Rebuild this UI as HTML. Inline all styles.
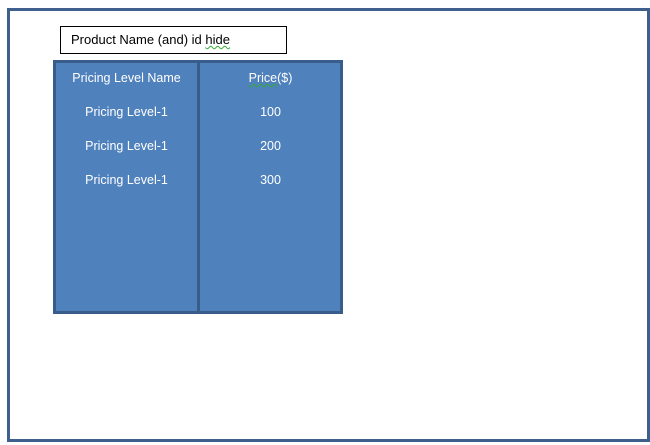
<!DOCTYPE html><html><head><style>
body{margin:0;width:650px;height:445px;background:#fff;position:relative;font-family:"Liberation Sans",sans-serif;overflow:hidden}
.o{position:absolute;left:7px;top:8px;width:637px;height:428px;border:3px solid #3f5f8c}
.b{position:absolute;left:60px;top:26px;border:1px solid #000;font-size:13px;line-height:26px;padding-left:10px;box-sizing:border-box;width:227px;height:28px}
.t{position:absolute;left:53px;top:60px;width:284px;height:248px;border:3px solid #385d8a;background:#4f81bd}
.d{position:absolute;left:197px;top:60px;width:3px;height:254px;background:#385d8a}
.c{position:absolute;color:#fff;font-size:12.5px;text-align:center}
.sq{text-decoration:underline wavy #3a3;text-decoration-thickness:1px}
</style></head><body>
<div class="o"></div>
<div class="b">Product Name (and) id <span class="sq">hide</span></div>
<div class="t"></div><div class="d"></div>
<div class="c" style="left:56px;width:141px;top:71px">Pricing Level Name</div>
<div class="c" style="left:200px;width:141px;top:71px"><span class="sq">Price</span>($)</div>
<div class="c" style="left:56px;width:141px;top:105px">Pricing Level-1</div>
<div class="c" style="left:200px;width:141px;top:105px">100</div>
<div class="c" style="left:56px;width:141px;top:139px">Pricing Level-1</div>
<div class="c" style="left:200px;width:141px;top:139px">200</div>
<div class="c" style="left:56px;width:141px;top:173px">Pricing Level-1</div>
<div class="c" style="left:200px;width:141px;top:173px">300</div>
</body></html>
